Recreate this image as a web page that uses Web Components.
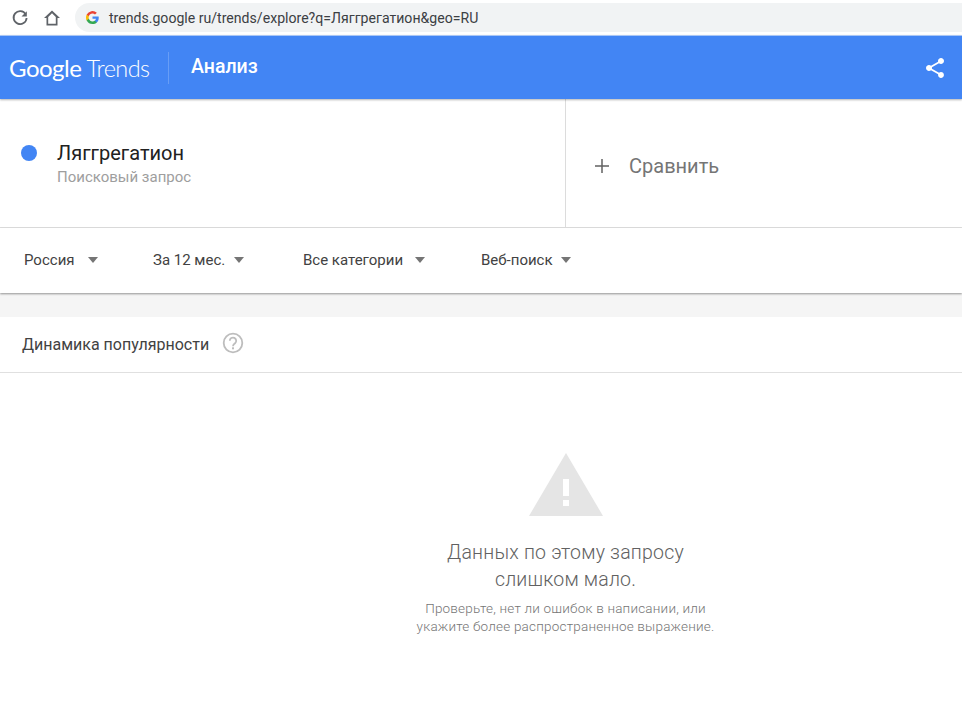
<!DOCTYPE html>
<html lang="ru">
<head>
<meta charset="utf-8">
<title>Google Trends</title>
<style>
    html, body { margin: 0; padding: 0; background: #fff; }
    body { font-family: Roboto, "Liberation Sans", sans-serif; height: 708px; overflow: hidden; }
</style>
</head>
<body>
<browser-bar url="trends.google ru/trends/explore?q=Ляггрегатион&geo=RU"></browser-bar>
<trends-header></trends-header>
<search-row term="Ляггрегатион" kind="Поисковый запрос"></search-row>
<filter-bar>
    <filter-item style="width:129px;--gap:13px">Россия</filter-item>
    <filter-item style="width:150px;--gap:9px">За 12 мес.</filter-item>
    <filter-item style="width:178px;--gap:12px">Все категории</filter-item>
    <filter-item style="--gap:8px">Веб-поиск</filter-item>
</filter-bar>
<section-title>Динамика популярности</section-title>
<empty-state></empty-state>

<script>
class BrowserBar extends HTMLElement {
    constructor() {
        super();
        this.attachShadow({ mode: "open" });
    }

    connectedCallback() {
        this.shadowRoot.innerHTML = `
            <style>
                :host { display: flex; align-items: center; height: 35px; background: #fff; padding-left: 11px; box-sizing: border-box; }
                svg { display: block; flex: none; }
                .home { margin-left: 13px; }
                .url {
                    display: flex;
                    align-items: center;
                    height: 29px;
                    margin-left: 13px;
                    padding-left: 11px;
                    flex: 1;
                    background: #f1f3f4;
                    border-radius: 15px 0 0 15px;
                    font: 14.100px Roboto, sans-serif;
                    color: #3c4043;
                }
                .url span { margin-left: 10px; white-space: nowrap; }
            </style>
            <svg width="18" height="18" viewBox="0 0 18 18"><path d="M14.700 5.300A6.500 6.500 0 1 0 15.600 9" fill="none" stroke="#5f6368" stroke-width="1.800"/><path d="M15.800 2.200v5.300h-5.300z" fill="#5f6368"/></svg>
            <svg class="home" width="20" height="20" viewBox="0 0 20 20"><path d="M10 2.500 2 10h2.500v7.500h11V10H18zM6.200 15.800V8.900L10 5.200l3.800 3.700v6.900z" fill="#5f6368"/></svg>
            <div class="url">
                <svg width="13" height="13" viewBox="0 0 24 24">
                    <path d="M23.500 12.300c0-.8-.1-1.600-.2-2.300H12v4.500h6.500a5.500 5.500 0 0 1-2.400 3.600v3h3.900c2.300-2.100 3.500-5.200 3.500-8.800z" fill="#4285f4"/>
                    <path d="M12 24c3.200 0 6-1.100 8-2.900l-3.900-3c-1.100.7-2.500 1.200-4.100 1.200-3.100 0-5.800-2.100-6.700-5H1.300v3.100A12 12 0 0 0 12 24z" fill="#34a853"/>
                    <path d="M5.300 14.300a7.200 7.200 0 0 1 0-4.600V6.600h-4a12 12 0 0 0 0 10.800z" fill="#fbbc05"/>
                    <path d="M12 4.800c1.800 0 3.300.6 4.600 1.800l3.400-3.400A12 12 0 0 0 1.300 6.600l4 3.100c.9-2.800 3.600-4.900 6.700-4.900z" fill="#ea4335"/>
                </svg>
                <span></span>
            </div>
        `;
        this.shadowRoot.querySelector("span").textContent = this.getAttribute("url");
    }
}

customElements.define("browser-bar", BrowserBar);

class TrendsHeader extends HTMLElement {
    constructor() {
        super();
        this.attachShadow({ mode: "open" });
    }

    connectedCallback() {
        this.shadowRoot.innerHTML = `
            <style>
                :host {
                    display: flex;
                    align-items: center;
                    position: relative;
                    z-index: 1;
                    height: 64px;
                    background: #4285f4;
                    color: #fff;
                    box-shadow: 0 1px 2px rgba(0,0,0,.3);
                    border-top: 1px solid #a9c6f5;
                    box-sizing: border-box;
                }
                .logo { margin-left: 9px; width: 142px; white-space: nowrap; font: 24px Lato, sans-serif; letter-spacing: -.5px; }
                .logo span { font-weight: 300; font-size: 23.500px; letter-spacing: -.6px; }
                .sep { width: 1px; height: 32px; margin-left: 17px; background: rgba(255,255,255,.2); }
                .title { margin: 0 0 3px 22px; font: 500 19.500px Roboto, sans-serif; }
                svg { margin-left: auto; margin-right: 15px; display: block; }
            </style>
            <div class="logo">Google<span> Trends</span></div>
            <div class="sep"></div>
            <div class="title">Анализ</div>
            <svg width="24" height="24" viewBox="0 0 24 24"><path fill="#fff" d="M18 16.080c-.76 0-1.440.3-1.960.77L8.910 12.700c.05-.23.09-.46.09-.7s-.04-.47-.09-.7l7.050-4.110c.54.5 1.250.81 2.040.81 1.660 0 3-1.340 3-3s-1.340-3-3-3-3 1.340-3 3c0 .24.04.47.09.7L8.040 9.810C7.500 9.310 6.790 9 6 9c-1.660 0-3 1.340-3 3s1.340 3 3 3c.79 0 1.500-.31 2.040-.81l7.120 4.160c-.05.21-.08.43-.08.65 0 1.610 1.310 2.920 2.920 2.920s2.920-1.310 2.920-2.920-1.310-2.920-2.920-2.920z"/></svg>
        `;
    }
}

customElements.define("trends-header", TrendsHeader);

class SearchRow extends HTMLElement {
    constructor() {
        super();
        this.attachShadow({ mode: "open" });
    }

    connectedCallback() {
        this.shadowRoot.innerHTML = `
            <style>
                :host { display: flex; height: 129px; border-bottom: 1px solid #e0e0e0; box-sizing: border-box; }
                .term { display: flex; width: 566px; padding: 43px 0 0 21px; box-sizing: border-box; border-right: 1px solid #dcdcdc; }
                .dot { width: 16px; height: 16px; margin-top: 3px; border-radius: 50%; background: #4285f4; }
                .text { margin-left: 20px; }
                .name { font-size: 20px; line-height: 22px; color: #212121; }
                .kind { font-size: 15px; line-height: 16px; margin-top: 5px; color: #9e9e9e; }
                .compare { display: flex; align-items: center; padding: 0 0 0 28px; height: 134px; color: #757575; font-size: 20px; }
                .compare svg { display: block; margin-right: 19px; }
            </style>
            <div class="term">
                <div class="dot"></div>
                <div class="text">
                    <div class="name"></div>
                    <div class="kind"></div>
                </div>
            </div>
            <div class="compare">
                <svg width="16" height="16" viewBox="0 0 16 16"><path d="M8 1v14M1 8h14" stroke="#616161" stroke-width="1.500" fill="none"/></svg>
                Сравнить
            </div>
        `;
        this.shadowRoot.querySelector(".name").textContent = this.getAttribute("term");
        this.shadowRoot.querySelector(".kind").textContent = this.getAttribute("kind");
    }
}

customElements.define("search-row", SearchRow);

class FilterBar extends HTMLElement {
    constructor() {
        super();
        this.attachShadow({ mode: "open" });
        this.shadowRoot.innerHTML = `
            <style>
                :host {
                    display: flex;
                    align-items: center;
                    position: relative;
                    height: 65px;
                    padding: 0 0 1px 24px;
                    box-sizing: border-box;
                    background: #fff;
                    box-shadow: 0 1px 2px rgba(0,0,0,.4);
                }
            </style>
            <slot></slot>
        `;
    }
}

customElements.define("filter-bar", FilterBar);

class FilterItem extends HTMLElement {
    constructor() {
        super();
        this.attachShadow({ mode: "open" });
        this.shadowRoot.innerHTML = `
            <style>
                :host { display: flex; align-items: center; flex: none; font-size: 15px; color: #424242; white-space: nowrap; }
                i { width: 0; height: 0; margin-left: var(--gap); border: 5.500px solid transparent; border-top: 6px solid #757575; border-bottom: 0; }
            </style>
            <slot></slot><i></i>
        `;
    }
}

customElements.define("filter-item", FilterItem);

class SectionTitle extends HTMLElement {
    constructor() {
        super();
        this.attachShadow({ mode: "open" });
        this.shadowRoot.innerHTML = `
            <style>
                :host {
                    display: flex;
                    align-items: center;
                    height: 80px;
                    padding-left: 22px;
                    box-sizing: border-box;
                    border-top: 24px solid #f5f5f5;
                    border-bottom: 1px solid #e0e0e0;
                    font-size: 16px;
                    color: #424242;
                    background: #fff;
                }
                svg { display: block; margin: -3px 0 0 12px; }
            </style>
            <slot></slot>
            <svg width="24" height="24" viewBox="0 0 24 24"><circle cx="12" cy="12" r="9.300" fill="none" stroke="#bdbdbd" stroke-width="1.800"/><path d="M8.800 9.800a3.200 3.200 0 1 1 5.300 2.400c-1.200 1-2.100 1.500-2.100 3" fill="none" stroke="#bdbdbd" stroke-width="1.800"/><rect x="11" y="16.300" width="2" height="2" fill="#bdbdbd"/></svg>
        `;
    }
}

customElements.define("section-title", SectionTitle);

class EmptyState extends HTMLElement {
    constructor() {
        super();
        this.attachShadow({ mode: "open" });
    }

    connectedCallback() {
        this.shadowRoot.innerHTML = `
            <style>
                :host { display: flex; flex-direction: column; align-items: center; padding: 80px 0 0 169px; text-align: center; }
                svg { display: block; }
                .main { margin-top: 23px; font-size: 19.500px; font-weight: 300; line-height: 27px; color: #616161; letter-spacing: .2px; }
                .hint { margin-top: 6px; font-size: 13.500px; font-weight: 300; line-height: 18px; color: #757575; letter-spacing: .2px; }
            </style>
            <svg width="74" height="63" viewBox="0 0 74 63"><path fill-rule="evenodd" fill="#e5e5e5" d="M37 0 74 63H0zM34 26v17h6V26zM34 47v6h6v-6z"/></svg>
            <div class="main">Данных по этому запросу<br>слишком мало.</div>
            <div class="hint">Проверьте, нет ли ошибок в написании, или<br>укажите более распространенное выражение.</div>
        `;
    }
}

customElements.define("empty-state", EmptyState);
</script>
</body>
</html>
